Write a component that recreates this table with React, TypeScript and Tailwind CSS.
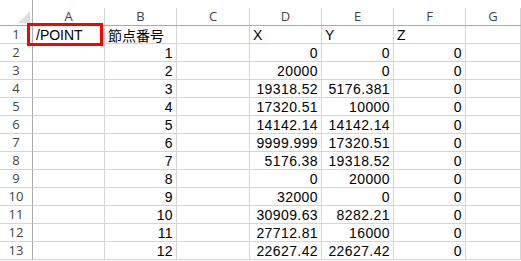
import React from "react";

const cols = ["A", "B", "C", "D", "E", "F", "G"];
const colW = ["w-[72px]", "w-[72px]", "w-[73px]", "w-[72px]", "w-[72px]", "w-[72px]", "w-[55px]"];

type Cell = { t: string; r?: boolean; jp?: boolean };

const data: Cell[][] = [
  [{ t: "/POINT" }, { t: "節点番号", jp: true }, { t: "" }, { t: "X" }, { t: "Y" }, { t: "Z" }, { t: "" }],
];
const nums: [string, string, string, string][] = [
  ["1", "0", "0", "0"],
  ["2", "20000", "0", "0"],
  ["3", "19318.52", "5176.381", "0"],
  ["4", "17320.51", "10000", "0"],
  ["5", "14142.14", "14142.14", "0"],
  ["6", "9999.999", "17320.51", "0"],
  ["7", "5176.38", "19318.52", "0"],
  ["8", "0", "20000", "0"],
  ["9", "32000", "0", "0"],
  ["10", "30909.63", "8282.21", "0"],
  ["11", "27712.81", "16000", "0"],
  ["12", "22627.42", "22627.42", "0"],
];
nums.forEach((n) => {
  data.push([
    { t: "" },
    { t: n[0], r: true },
    { t: "" },
    { t: n[1], r: true },
    { t: n[2], r: true },
    { t: n[3], r: true },
    { t: "" },
  ]);
});

const cellFont = { fontFamily: '"Liberation Sans", "Noto Sans CJK JP", sans-serif' };
const jpFont = { fontFamily: '"Noto Sans CJK JP", sans-serif' };
const hdrFont = { fontFamily: '"Open Sans", "Liberation Sans", sans-serif' };

export default function App() {
  return (
    <div className="relative w-[521px] h-[261px] overflow-hidden bg-white">
      <div className="flex h-[26px] border-b border-[#ababab]">
        <div className="relative w-[33px] shrink-0 border-r border-[#ababab] pt-[8px]">
          <svg className="absolute left-[18px] top-[11px]" width="12" height="12" viewBox="0 0 12 12">
            <polygon points="12,0 12,12 0,12" fill="#dfdfdf" />
          </svg>
        </div>
        {cols.map((c, i) => (
          <div key={c} className={`${colW[i]} shrink-0 pt-[8px]`}>
            <div
              className="h-[17px] border-r border-[#d4d4d4] flex items-center justify-center text-[13px] text-[#444]"
              style={hdrFont}
            >
              {c}
            </div>
          </div>
        ))}
      </div>
      {data.map((row, ri) => (
        <div key={ri} className="flex h-[18px]">
          <div
            className="w-[33px] shrink-0 border-r border-b border-[#ababab] border-b-[#d4d4d4] flex items-center justify-center text-[13px] text-[#444]"
            style={hdrFont}
          >
            {ri + 1}
          </div>
          {row.map((cell, ci) => (
            <div
              key={ci}
              className={`${colW[ci]} shrink-0 border-r border-b border-[#d4d4d4] flex items-center text-[14px] leading-none text-black whitespace-nowrap overflow-visible ${
                cell.r ? "justify-end pr-[3px] tracking-[0.4px]" : "justify-start pl-[3px]"
              }`}
              style={cell.jp ? jpFont : cellFont}
            >
              {cell.t}
            </div>
          ))}
        </div>
      ))}
      <div className="absolute left-[27px] top-[23px] w-[76px] h-[23px] border-[3px] border-[#ff0000]" />
    </div>
  );
}
